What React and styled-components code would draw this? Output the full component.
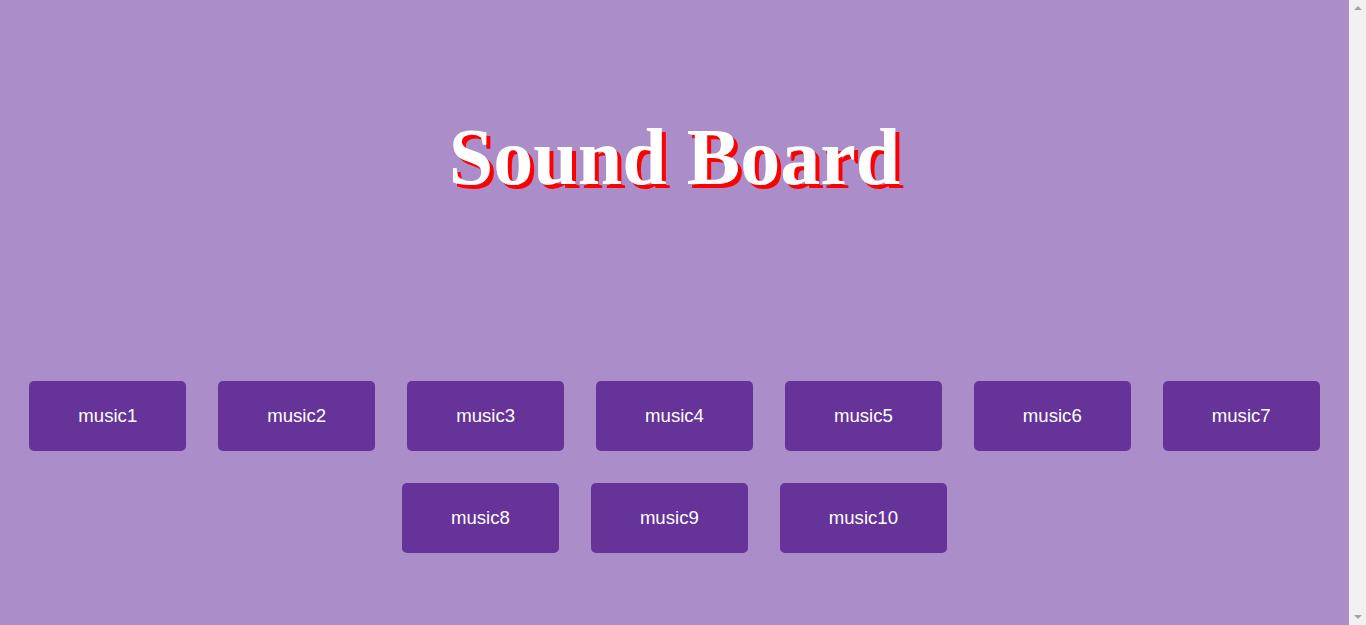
import React from "react";
import styled, { createGlobalStyle } from "styled-components";

const Global = createGlobalStyle`
  html, body {
    margin: 0;
    padding: 0;
  }
  body {
    background: #ab8dc9;
    font-family: "Liberation Serif", "Times New Roman", serif;
  }
`;

const Page = styled.main`
  display: flex;
  flex-direction: column;
  align-items: center;
  padding: 100px 17px 60px 0;
`;

const Title = styled.h1`
  margin: 0 0 150px;
  font-family: "Liberation Serif", "Times New Roman", serif;
  font-weight: bold;
  font-size: 80px;
  line-height: 115px;
  color: #ffffff;
  text-shadow: 4px 4px 0 #ff0000;
`;

const Board = styled.div`
  display: flex;
  flex-wrap: wrap;
  justify-content: center;
  width: 100%;
`;

const SoundButton = styled.button`
  margin: 16px;
  padding: 24px 49px;
  border: none;
  border-radius: 5px;
  background: #663399;
  color: #ffffff;
  font-family: "Liberation Sans", Arial, sans-serif;
  font-size: 18.6px;
  line-height: 22px;
  cursor: pointer;
`;

const ScrollTrack = styled.div`
  position: fixed;
  top: 0;
  right: 0;
  bottom: 0;
  width: 17px;
  background: #f1f1f1;
  display: flex;
  flex-direction: column;
  justify-content: space-between;
  align-items: center;
  padding: 6px 0;
  box-sizing: border-box;
`;

const Arrow = styled.span`
  width: 0;
  height: 0;
  border-left: 4px solid transparent;
  border-right: 4px solid transparent;
  ${(p) =>
    p.$down
      ? "border-top: 4px solid #a3a3a3;"
      : "border-bottom: 4px solid #a3a3a3;"}
`;

const sounds = Array.from({ length: 10 }, (_, i) => `music${i + 1}`);

export default function App() {
  return (
    <>
      <Global />
      <Page>
        <Title>Sound Board</Title>
        <Board>
          {sounds.map((s) => (
            <SoundButton key={s}>{s}</SoundButton>
          ))}
        </Board>
      </Page>
      <ScrollTrack aria-hidden="true">
        <Arrow />
        <Arrow $down />
      </ScrollTrack>
    </>
  );
}
